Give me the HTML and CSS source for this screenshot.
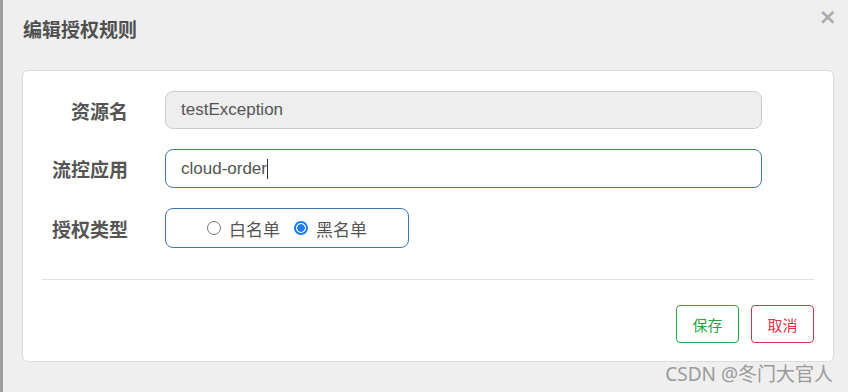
FILE: index.html
```html
<!DOCTYPE html>
<html>
<head>
<meta charset="utf-8">
<link rel="stylesheet" href="styles.css">
</head>
<body>
<div class="page">
  <div class="strip"></div>
  <div class="dialog">
    <div class="header">
      <h4 class="title">编辑授权规则</h4>
      <span class="close">×</span>
    </div>
    <div class="card">
      <div class="row">
        <label class="label">资源名</label>
        <div class="input disabled">testException</div>
      </div>
      <div class="row">
        <label class="label">流控应用</label>
        <div class="input focus">cloud-order<span class="caret"></span></div>
      </div>
      <div class="row">
        <label class="label">授权类型</label>
        <div class="radio-box">
          <span class="radio"></span><span class="rtext">白名单</span>
          <span class="radio checked"></span><span class="rtext">黑名单</span>
        </div>
      </div>
      <div class="divider"></div>
      <div class="actions">
        <button class="btn save">保存</button>
        <button class="btn cancel">取消</button>
      </div>
    </div>
    <div class="watermark">CSDN @冬门大官人</div>
  </div>
</div>
</body>
</html>
```
FILE: styles.css
```css
html, body {
  margin: 0;
  padding: 0;
  background: #efefef;
  font-family: "Liberation Sans", "Noto Sans CJK SC", sans-serif;
}
.page {
  width: 848px;
  height: 392px;
  display: flex;
  position: relative;
  overflow: hidden;
}
.strip {
  width: 3px;
  background: #9d9d9d;
  flex: none;
}
.dialog {
  flex: 1;
  padding: 0 14px 0 19px;
  position: relative;
}
.header {
  height: 70px;
  display: flex;
  align-items: flex-start;
  justify-content: space-between;
}
.title {
  margin: 18px 0 0 1px;
  font-size: 19px;
  font-weight: bold;
  color: #4f4f4f;
  line-height: 26px;
}
.close {
  font-size: 22px;
  font-weight: bold;
  color: #aaaaaa;
  line-height: 20px;
  margin: 7px -3px 0 0;
  font-family: "DejaVu Sans", sans-serif;
}
.card {
  background: #fff;
  border: 1px solid #dcdcdc;
  border-radius: 6px;
  height: 292px;
  box-sizing: border-box;
  padding: 20px 19px 0 19px;
}
.row {
  display: flex;
  align-items: center;
  margin-bottom: 20px;
}
.label {
  width: 86px;
  text-align: right;
  font-size: 19px;
  font-weight: bold;
  color: #555;
  margin-right: 37px;
  flex: none;
}
.input {
  width: 597px;
  height: 39px;
  box-sizing: border-box;
  border: 1px solid #ccc;
  border-radius: 8px;
  padding: 0 15px;
  font-size: 17px;
  color: #555;
  display: flex;
  align-items: center;
}
.input.disabled {
  background: #eeeeee;
  height: 38px;
}
.input.focus {
  border-color: #3d7ab5;
}
.caret {
  display: inline-block;
  width: 1px;
  height: 20px;
  background: #333;
}
.radio-box {
  width: 244px;
  height: 40px;
  box-sizing: border-box;
  border: 1px solid #3d7ab5;
  border-radius: 8px;
  display: flex;
  align-items: center;
  justify-content: center;
  font-size: 17px;
  color: #555;
}
.radio {
  width: 14px;
  height: 14px;
  box-sizing: border-box;
  border: 1px solid #767676;
  border-radius: 50%;
  margin-right: 8px;
  flex: none;
}
.radio.checked {
  border: 2px solid #1a7cf0;
  background: radial-gradient(circle, #1a7cf0 0 3.5px, #fff 4px);
}
.rtext {
  margin-right: 14px;
}
.rtext:last-child {
  margin-right: 0;
}
.divider {
  height: 1px;
  background: #e0e0e0;
  margin-top: 31px;
}
.actions {
  display: flex;
  justify-content: flex-end;
  gap: 12px;
  margin-top: 25px;
}
.btn {
  width: 63px;
  height: 38px;
  background: #fff;
  border-radius: 4px;
  font-size: 15px;
  font-family: "Liberation Sans", "Noto Sans CJK SC", sans-serif;
  padding: 0;
}
.btn.save {
  border: 1px solid #28a745;
  color: #28a745;
}
.btn.cancel {
  border: 1px solid #dc3545;
  color: #dc3545;
}
.watermark {
  position: absolute;
  right: 15px;
  bottom: 6px;
  font-size: 19px;
  line-height: 24px;
  color: #9a9a9a;
  font-family: "Noto Sans", "Noto Sans CJK SC", sans-serif;
}
```
